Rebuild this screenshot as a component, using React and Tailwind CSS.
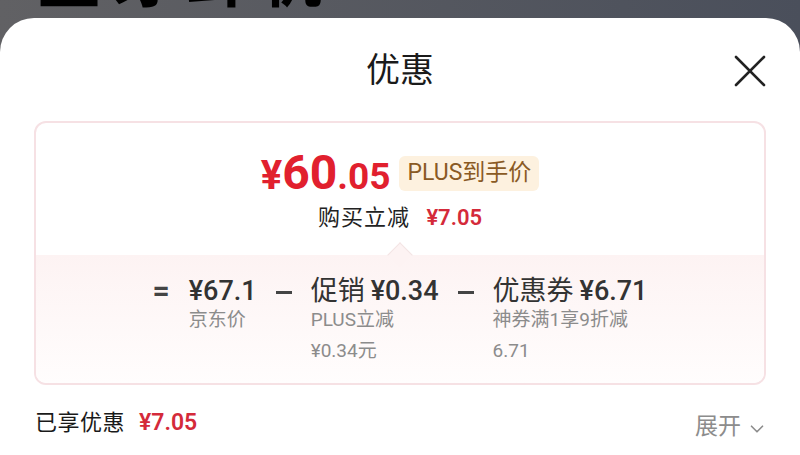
import { ChevronDown } from "lucide-react";

const font = { fontFamily: '"Roboto", "Noto Sans CJK SC", sans-serif' };

function Part({ title, amount, sub }) {
  return (
    <div className="flex flex-col">
      <div className="text-[27px] leading-[32px] text-[#333] font-medium whitespace-nowrap">
        {title && <span className="mr-[6px] font-normal">{title}</span>}
        {amount}
      </div>
      <div className="-mt-[3px] text-[19px] leading-[31px] text-[#8c8c8c]">
        {sub.map((s) => (
          <div key={s}>{s}</div>
        ))}
      </div>
    </div>
  );
}

function Minus() {
  return <div className="mt-[16px] w-[16px] h-[3px] bg-[#444]" />;
}

export default function App() {
  return (
    <div className="w-[800px] h-[455px] overflow-hidden bg-gradient-to-r from-[#616164] to-[#4a4f5b]" style={font}>
      {/* page behind the sheet */}
      <div className="h-[18px] overflow-hidden pl-[38px]">
        <div className="-mt-[50px] text-[62px] leading-[62px] font-bold text-black tracking-[12px]">
          蓝牙耳机
        </div>
      </div>

      <div className="h-[437px] bg-white rounded-t-[34px]">
        {/* header */}
        <div className="relative h-[103px] flex items-center justify-center">
          <h1 className="text-[34px] leading-[38px] text-[#1a1a1a] font-normal">优惠</h1>
          <button className="absolute right-[34px] top-[37px] text-[#222]">
            <svg width="32" height="32" viewBox="0 0 32 32" fill="none" stroke="currentColor" strokeWidth="2.6" strokeLinecap="round">
              <path d="M2 2L30 30M30 2L2 30" />
            </svg>
          </button>
        </div>

        {/* price card */}
        <div className="mx-[34px] h-[264px] rounded-[12px] border-2 border-[#f6e1e4] overflow-hidden flex flex-col">
          <div className="h-[132px] flex flex-col items-center pt-[32px]">
            <div className="flex items-center h-[36px]">
              <span className="text-[#e1202e] font-bold leading-none whitespace-nowrap">
                <span className="text-[40px]">¥</span>
                <span className="text-[48px]">60</span>
                <span className="text-[37px]">.05</span>
              </span>
              <span className="ml-[9px] px-[8px] h-[35px] flex items-center rounded-[6px] bg-[#fdf1df] text-[#8a5a24] text-[23px] font-normal">
                PLUS到手价
              </span>
            </div>
            <div className="mt-[14px] text-[22px] leading-[26px] text-[#222] tracking-[1px]">
              购买立减 <span className="ml-[10px] text-[#d42a3a] text-[22px] font-semibold tracking-normal">¥7.05</span>
            </div>
          </div>
          <div className="relative flex-1 bg-gradient-to-b from-[#fdf3f3] to-[#fffdfd]">
            <div className="absolute -top-[9px] left-1/2 -ml-[9px] w-[18px] h-[18px] rotate-45 bg-[#fdf3f3] border-l border-t border-[#f3e4e4]" />
            <div className="flex justify-center gap-[19px] pt-[20px]">
              <div className="text-[30px] leading-[32px] text-[#444] font-bold">=</div>
              <Part amount="¥67.1" sub={["京东价"]} />
              <Minus />
              <Part title="促销" amount="¥0.34" sub={["PLUS立减", "¥0.34元"]} />
              <Minus />
              <Part title="优惠券" amount="¥6.71" sub={["神券满1享9折减", "6.71"]} />
            </div>
          </div>
        </div>

        {/* footer */}
        <div className="ml-[35px] mr-[32px] mt-[20px] flex items-center justify-between">
          <div className="text-[22px] leading-[28px] text-[#1a1a1a] tracking-[0.5px]">
            已享优惠 <span className="ml-[8px] text-[23px] text-[#d42a3a] font-semibold tracking-normal">¥7.05</span>
          </div>
          <div className="mt-[8px] flex items-center text-[23px] leading-[28px] text-[#8c8c8c]">
            展开
            <ChevronDown size={22} strokeWidth={1.8} className="ml-[5px] mt-[3px]" />
          </div>
        </div>
      </div>
    </div>
  );
}
